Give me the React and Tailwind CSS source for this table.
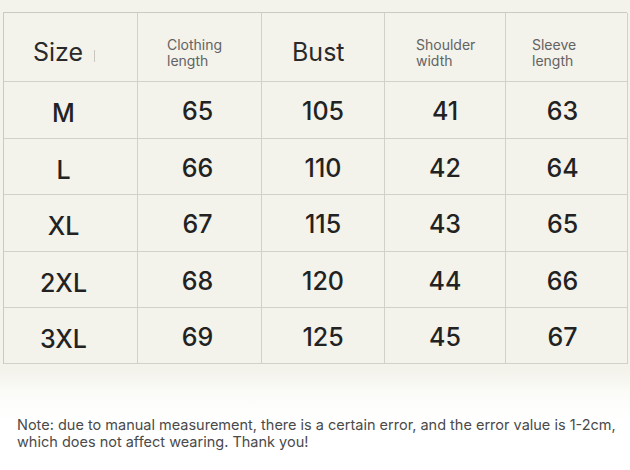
import React from "react";

const rows = [
  ["M", "65", "105", "41", "63"],
  ["L", "66", "110", "42", "64"],
  ["XL", "67", "115", "43", "65"],
  ["2XL", "68", "120", "44", "66"],
  ["3XL", "69", "125", "45", "67"],
];

const cell = "border-r border-b border-[#d2d0c9] flex items-center";

export default function App() {
  return (
    <div
      className="w-[630px] h-[470px] overflow-hidden bg-[linear-gradient(to_bottom,#f3f2eb_0px,#f3f2eb_370px,#fbfbf8_392px,#ffffff_420px,#ffffff_100%)]"
      style={{ fontFamily: "Inter, 'Liberation Sans', sans-serif" }}
    >
      <div className="pt-[12px] pl-[3px]">
        <div className="grid grid-cols-[134px_124px_123px_121px_122px] border-l border-t border-[#cbc9c2] w-[624px]">
          {/* header */}
          <div className={`${cell} h-[69px] pl-[29px] pt-[11px] text-[25px] text-[#2a2a2a]`}>
            <span>Size</span>
            <span className="ml-[11px] mt-[6px] w-px h-[12px] bg-[#c9c7c0]" />
          </div>
          <div className={`${cell} h-[69px] pl-[29px] pt-[12px] text-[14px] leading-[16px] text-[#636363]`}>
            <span>Clothing<br />length</span>
          </div>
          <div className={`${cell} h-[69px] pl-[30px] pt-[11px] text-[25px] text-[#2a2a2a]`}>
            <span>Bust</span>
          </div>
          <div className={`${cell} h-[69px] pl-[31px] pt-[12px] text-[14px] leading-[16px] text-[#636363]`}>
            <span>Shoulder<br />width</span>
          </div>
          <div className={`${cell} h-[69px] pl-[26px] pt-[12px] text-[14px] leading-[16px] text-[#636363]`}>
            <span>Sleeve<br />length</span>
          </div>
          {rows.map((r, i) => (
            <React.Fragment key={i}>
              {r.map((v, j) => (
                <div
                  key={j}
                  className={`${cell} ${i === 4 ? "h-[56px]" : "h-[56.5px]"} justify-center text-[25px] font-medium text-[#222] ${j === 0 ? "pr-[14px] pt-[8px]" : j === 1 ? "pr-[4px] pt-[4px]" : j === 4 ? "pr-[8px] pt-[4px]" : "pt-[4px]"}`}
                >
                  {v}
                </div>
              ))}
            </React.Fragment>
          ))}
        </div>
      </div>
      <div className="mt-[52px] pl-[17px] text-[14.5px] leading-[17px] text-[#4a4a4a]">
        Note: due to manual measurement, there is a certain error, and the error value is 1-2cm,
        <br />
        which does not affect wearing. Thank you!
      </div>
    </div>
  );
}
